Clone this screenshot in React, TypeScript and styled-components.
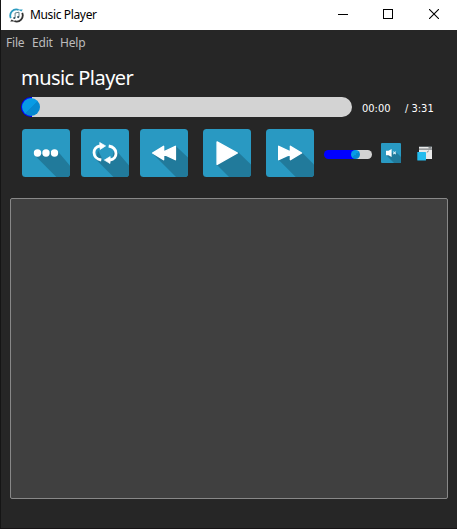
import React from "react";
import styled, { createGlobalStyle } from "styled-components";

const GlobalStyle = createGlobalStyle`
  * { box-sizing: border-box; }
  body { margin: 0; background: #262626; overflow: hidden; }
`;

const Window = styled.div`
  width: 457px;
  height: 529px;
  display: flex;
  flex-direction: column;
  background: #262626;
  border-left: 1px solid #151515;
  border-bottom: 1px solid #171416;
  color: #fff;
  font-family: "Noto Sans", sans-serif;
`;

const TitleBar = styled.header`
  height: 30px;
  flex: none;
  display: flex;
  align-items: center;
  background: #fff;
  color: #000;
  padding-left: 8px;
`;

const Label = styled.span<{ $size: number; $width: number; $face?: string; $color?: string }>`
  flex: none;
  width: ${(p) => p.$width}px;
  font-family: ${(p) => p.$face ?? '"Noto Sans"'}, sans-serif;
  font-size: ${(p) => p.$size}px;
  color: ${(p) => p.$color ?? "inherit"};
  line-height: 1;
  white-space: pre;
`;

const WindowTitle = styled(Label)`
  margin-left: 6px;
  letter-spacing: -0.36px;
`;

const WindowButtons = styled.div`
  margin-left: auto;
  display: flex;
  height: 30px;
`;

const WindowButton = styled.button`
  width: 46px;
  height: 30px;
  border: 0;
  padding: 0 0 2px;
  background: none;
  display: flex;
  align-items: center;
  justify-content: center;
`;

const MenuBar = styled.nav`
  display: flex;
  flex: none;
  height: 26px;
  align-items: center;
  padding-left: 5px;
`;

const MenuItem = styled(Label)`
  letter-spacing: -0.2px;
`;

const SongTitle = styled(Label)`
  height: 41px;
  line-height: 43px;
  margin-left: 20px;
  letter-spacing: -0.55px;
`;

const SeekRow = styled.div`
  display: flex;
  flex: none;
  align-items: center;
  height: 20px;
  padding-left: 20px;
`;

const SeekTrack = styled.div`
  width: 331px;
  height: 20px;
  border-radius: 10px;
  background: linear-gradient(to right, #0000ff 11px, #d3d3d3 11px);
  display: flex;
  align-items: center;
  padding-left: 1px;
`;

const Knob = styled.div<{ $size: number }>`
  width: ${(p) => p.$size}px;
  height: ${(p) => p.$size}px;
  border-radius: 50%;
  background: linear-gradient(135deg, #079be5 50%, #0688d0 50%);
`;

const Elapsed = styled(Label)`
  margin-left: 10px;
  padding-top: 2px;
`;

const Duration = styled(Label)`
  margin-left: 13px;
  padding-top: 2px;
`;

const Controls = styled.div`
  display: flex;
  flex: none;
  align-items: center;
  height: 48px;
  margin-top: 12px;
  padding-left: 21px;
`;

const IconButton = styled.button<{ $size: number; $gap: number }>`
  width: ${(p) => p.$size}px;
  height: ${(p) => p.$size}px;
  margin: 0 ${(p) => p.$gap}px 0 0;
  padding: 0;
  border: 0;
  background: none;
  flex: none;
  svg { display: block; }
`;

const VolumeTrack = styled.div`
  width: 48px;
  height: 9px;
  margin: 3px 9px 0 0;
  border-radius: 4.5px;
  background: linear-gradient(to right, #0000ff 32px, #d3d3d3 32px);
  display: flex;
  align-items: center;
  padding-left: 27px;
`;

const Playlist = styled.main`
  width: 438px;
  height: 301px;
  margin: 21px 0 0 9px;
  background: #404040;
  border: 1px solid #888;
  border-radius: 2px;
`;

const LogoIcon = () => (
  <svg width="15" height="15" viewBox="0 0 15 15" fill="none">
    <path d="M1.8 10.2C-0.3 5 4.2 0 9.6 1.8" stroke="#2c9bc0" strokeWidth="1.8" />
    <path d="M8.8 1.6H13.8L12.4 3.6Z" fill="#2c9bc0" />
    <path d="M13.2 4.8C15.3 10 10.8 15 5.4 13.2" stroke="#333" strokeWidth="1.8" />
    <path d="M6.2 13.4H1.2L2.6 11.4Z" fill="#333" />
    <path d="M6.1 9.8V5L10 4.2V8.8" stroke="#4f7480" strokeWidth="0.9" />
    <circle cx="5.3" cy="10" r="1.1" fill="#35515d" />
    <circle cx="9.2" cy="9.1" r="1.1" fill="#35515d" />
  </svg>
);

const shadows = {
  more: "M12.9 26.6L34.3 48H48V36.8L35.1 21.4Z",
  loop: "M15 30.5L32.5 48H48V36.5L33.5 19.5 31 30 22 31.5 17 21Z",
  back: "M13 25L36 48H48V28.5L36 17.2Z",
  play: "M13.5 35.5L26 48H48V35.5L35 23Z",
  next: "M12.3 30.6L29.7 48H48V35.5L36 23.5Z",
};

const glyphs = {
  more: (
    <>
      <circle cx="15.5" cy="24" r="3.7" />
      <circle cx="24" cy="24" r="3.7" />
      <circle cx="32.5" cy="24" r="3.7" />
    </>
  ),
  loop: (
    <>
      <path d="M20.3 31C10.8 29.2 10.8 18.2 19 17" fill="none" stroke="#fff" strokeWidth="2.8" />
      <path d="M18.7 13.5L24.6 16.9 19.2 20.4Z" />
      <path d="M27.7 17C37.2 18.8 37.2 29.8 29 31" fill="none" stroke="#fff" strokeWidth="2.8" />
      <path d="M29.2 27.6L23.4 31.1 29 34.5Z" />
    </>
  ),
  back: <path d="M12.6 24L23.6 17.3V22.9L35.4 17.3V30.7L23.6 25.1V30.7Z" />,
  play: <path d="M14.1 12.9L34.4 24 14.1 35.3Z" />,
  next: <path d="M12.7 17.3L24.4 22.9V17.3L35.6 24 24.4 30.7V25.1L12.7 30.7Z" />,
};

type Glyph = keyof typeof glyphs;

const outline: Record<Glyph, number> = { more: 0, loop: 0.7, back: 1.4, play: 1.4, next: 1.4 };

const ControlIcon = ({ name }: { name: Glyph }) => (
  <svg width="48" height="48" viewBox="0 0 48 48">
    <defs>
      <clipPath id={`tile-${name}`}>
        <rect width="48" height="48" rx="3.5" />
      </clipPath>
    </defs>
    <g clipPath={`url(#tile-${name})`}>
      <rect width="48" height="48" fill="#2999c2" />
      <path d={shadows[name]} fill="#217a9b" />
    </g>
    <g fill="#fff" stroke="#fff" strokeWidth={outline[name]} strokeLinejoin="round">
      {glyphs[name]}
    </g>
  </svg>
);

const MuteIcon = () => (
  <svg width="20" height="20" viewBox="0 0 20 20">
    <rect width="20" height="20" rx="1" fill="#2999c2" />
    <path d="M5 12L13 20H20V14L14.5 8.5Z" fill="#217a9b" />
    <path d="M5 7.7H7.5L10.6 6V14L7.5 12.3H5Z" fill="#fff" />
    <path d="M12.3 8.6L14.8 11.2M14.8 8.6L12.3 11.2" stroke="#d9f0f8" strokeWidth="1.1" />
  </svg>
);

const WindowsIcon = () => (
  <svg width="16" height="16" viewBox="0 0 16 16">
    <rect x="2" y="1" width="13" height="13" fill="#e9e9e9" />
    <rect x="2" y="1" width="13" height="1" fill="#565c5f" />
    <rect x="2" y="3.6" width="13" height="1" fill="#62686b" />
    <path d="M11.5 2.8H14.5" stroke="#62686b" strokeWidth="1" />
    <path d="M9.8 7.4L11.8 5.8" stroke="#777" strokeWidth="0.9" />
    <rect x="0.3" y="7" width="8.7" height="8.6" rx="0.6" fill="#24bbed" />
  </svg>
);

const controls: { name: Glyph; gap: number; label: string }[] = [
  { name: "more", gap: 11, label: "More" },
  { name: "loop", gap: 11, label: "Repeat" },
  { name: "back", gap: 15, label: "Previous" },
  { name: "play", gap: 15, label: "Play" },
  { name: "next", gap: 10, label: "Next" },
];

const timeFace = '"DejaVu Sans Condensed", "DejaVu Sans"';

export default function App() {
  return (
    <>
      <GlobalStyle />
      <Window>
        <TitleBar>
          <LogoIcon />
          <WindowTitle $size={12} $width={80}>Music Player</WindowTitle>
          <WindowButtons>
            <WindowButton aria-label="Minimize">
              <svg width="10" height="10" overflow="visible"><path d="M1 5.5H11" stroke="#000" /></svg>
            </WindowButton>
            <WindowButton aria-label="Maximize">
              <svg width="10" height="10"><rect x="0.5" y="0.5" width="9" height="9" fill="none" stroke="#000" /></svg>
            </WindowButton>
            <WindowButton aria-label="Close">
              <svg width="10" height="10"><path d="M0 0L10 10M10 0L0 10" stroke="#000" strokeWidth="1.1" /></svg>
            </WindowButton>
          </WindowButtons>
        </TitleBar>
        <MenuBar>
          <MenuItem $size={12} $width={26} $color="#bcbcbc">File</MenuItem>
          <MenuItem $size={12} $width={28} $color="#bcbcbc">Edit</MenuItem>
          <MenuItem $size={12} $width={30} $color="#bcbcbc">Help</MenuItem>
        </MenuBar>
        <SongTitle $size={20} $width={200}>music Player</SongTitle>
        <SeekRow>
          <SeekTrack>
            <Knob $size={18} />
          </SeekTrack>
          <Elapsed $size={11} $width={30} $face={timeFace}>00:00</Elapsed>
          <Duration $size={11} $width={40} $face={timeFace}>/ 3:31</Duration>
        </SeekRow>
        <Controls>
          {controls.map((c) => (
            <IconButton key={c.name} $size={48} $gap={c.gap} aria-label={c.label}>
              <ControlIcon name={c.name} />
            </IconButton>
          ))}
          <VolumeTrack>
            <Knob $size={9} />
          </VolumeTrack>
          <IconButton $size={20} $gap={16} aria-label="Mute">
            <MuteIcon />
          </IconButton>
          <IconButton $size={16} $gap={0} aria-label="Mini player">
            <WindowsIcon />
          </IconButton>
        </Controls>
        <Playlist />
      </Window>
    </>
  );
}
